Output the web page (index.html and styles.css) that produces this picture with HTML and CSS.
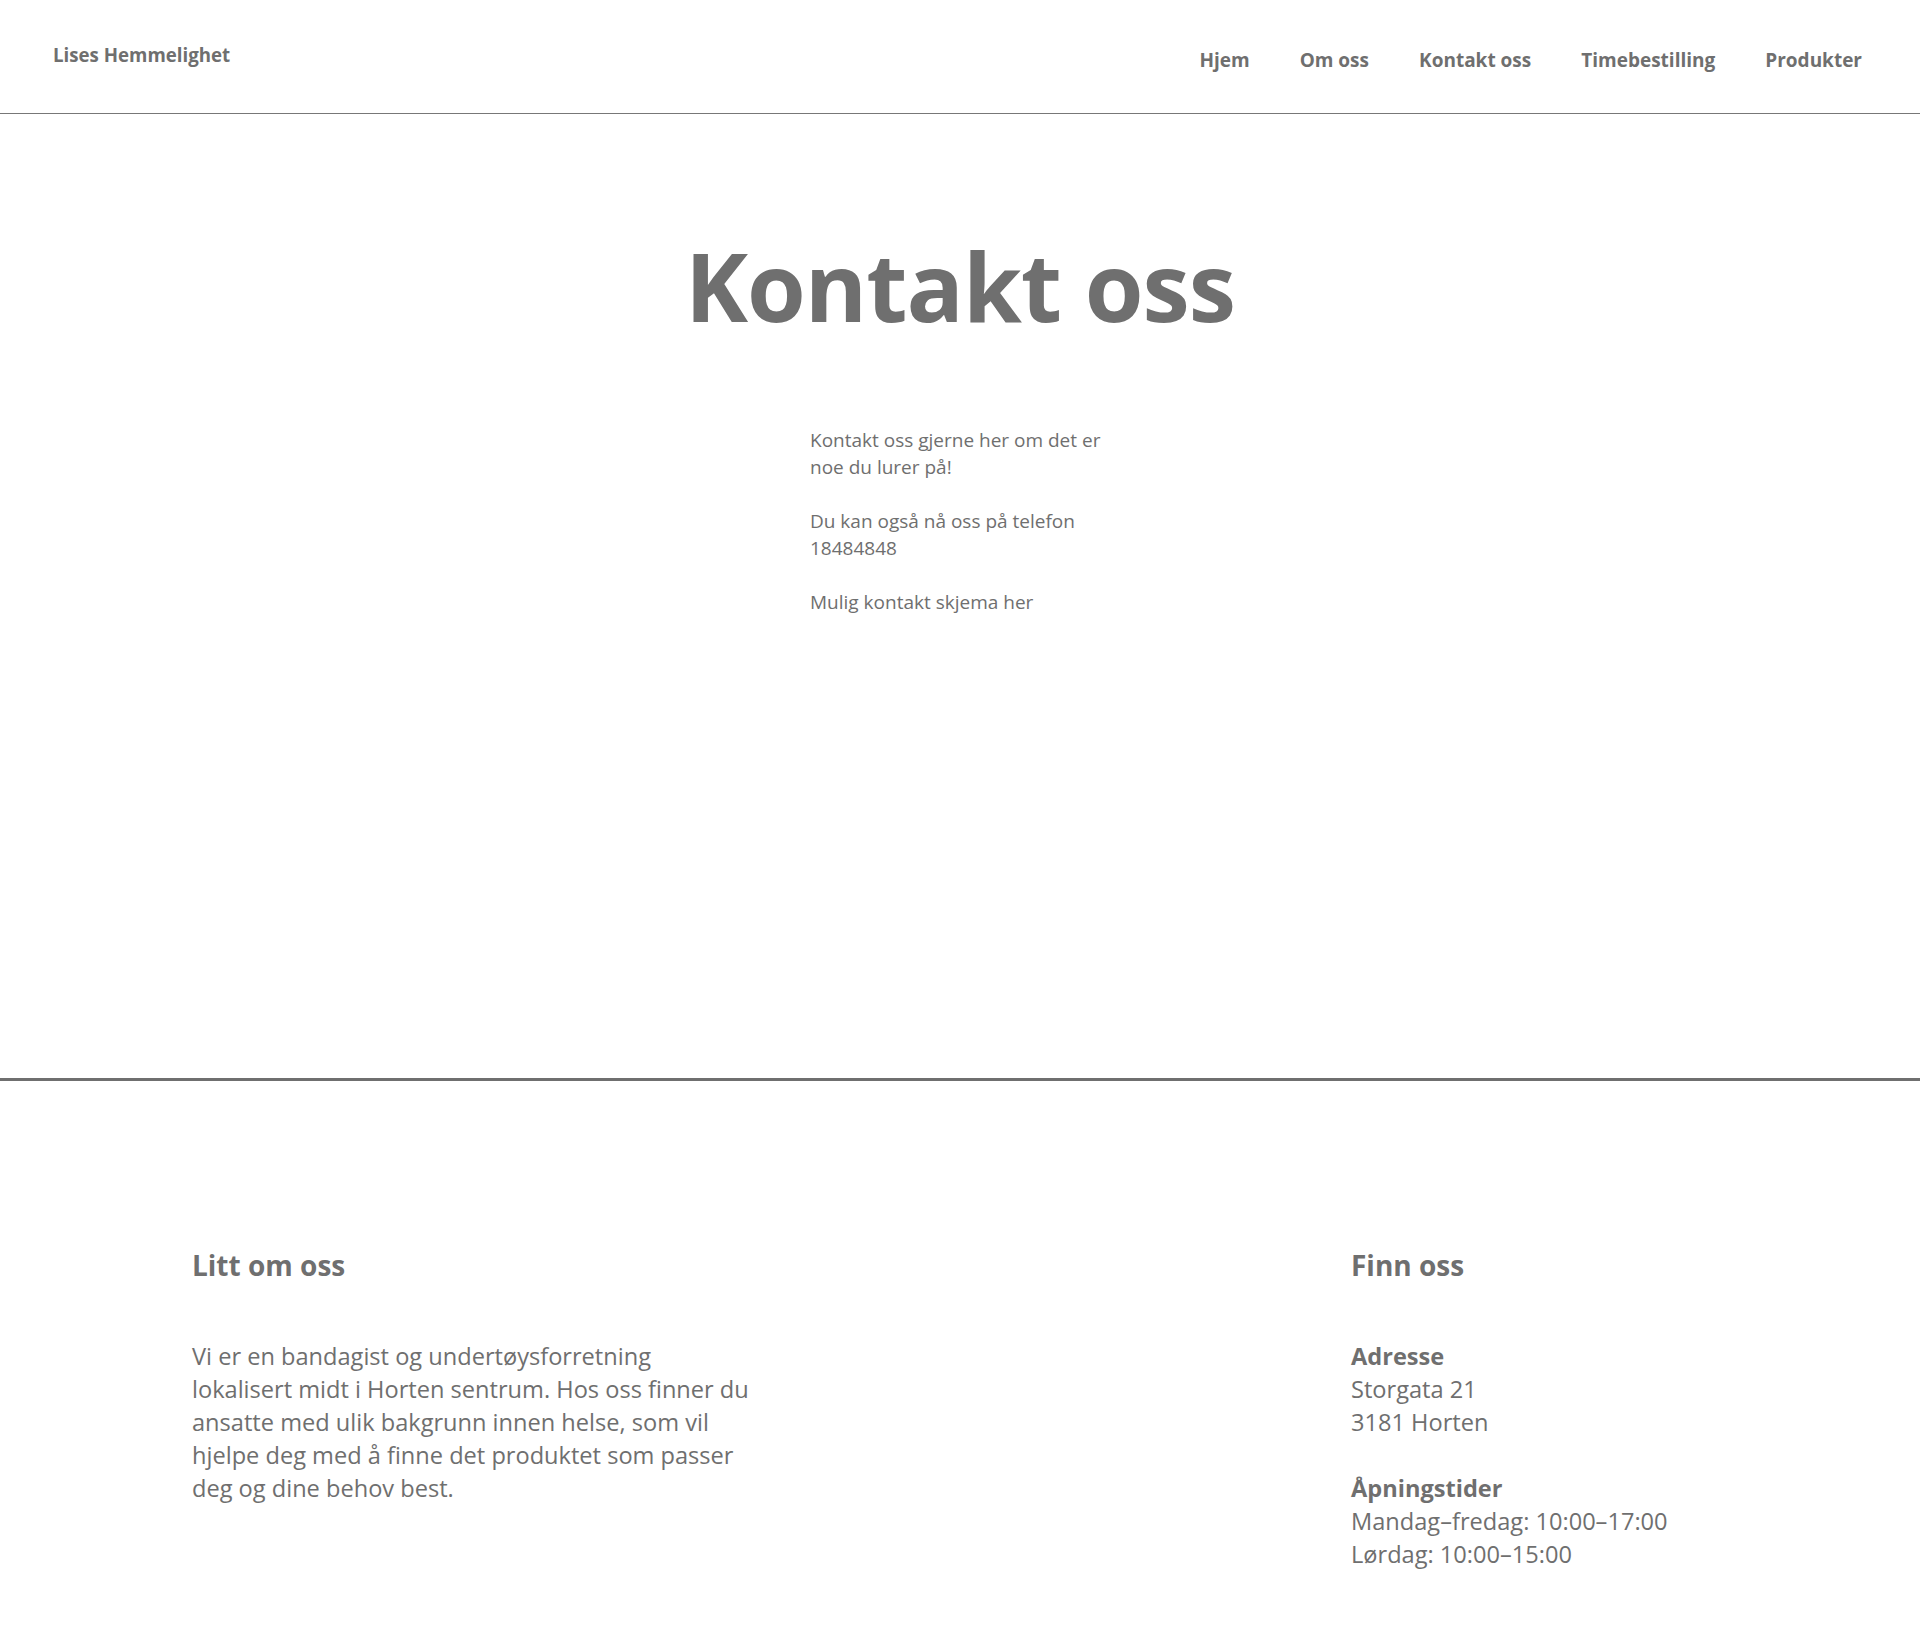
FILE: index.html
```html
<!DOCTYPE html>
<html lang="no">
<head>
<meta charset="utf-8">
<title>Kontakt oss – Lises Hemmelighet</title>
<link rel="stylesheet" href="styles.css">
</head>
<body>
<header class="site-header">
  <a class="logo" href="#">Lises Hemmelighet</a>
  <nav class="nav">
    <a href="#">Hjem</a>
    <a href="#">Om oss</a>
    <a href="#">Kontakt oss</a>
    <a href="#">Timebestilling</a>
    <a href="#">Produkter</a>
  </nav>
</header>
<main class="main">
  <h1 class="title">Kontakt oss</h1>
  <div class="intro">
    <p>Kontakt oss gjerne her om det er noe du lurer på!</p>
    <p>Du kan også nå oss på telefon 18484848</p>
    <p>Mulig kontakt skjema her</p>
  </div>
</main>
<footer class="site-footer">
  <section class="col col-about">
    <h2>Litt om oss</h2>
    <p>Vi er en bandagist og undertøysforretning lokalisert midt i Horten sentrum. Hos oss finner du ansatte med ulik bakgrunn innen helse, som vil hjelpe deg med å finne det produktet som passer deg og dine behov best.</p>
  </section>
  <section class="col col-find">
    <h2>Finn oss</h2>
    <p><strong>Adresse</strong><br>Storgata 21<br>3181 Horten</p>
    <p><strong>Åpningstider</strong><br>Mandag–fredag: 10:00–17:00<br>Lørdag: 10:00–15:00</p>
  </section>
</footer>
</body>
</html>
```
FILE: styles.css
```css
* { box-sizing: border-box; }
html, body { margin: 0; padding: 0; background: #fff; }
body {
  font-family: "Open Sans", "Noto Sans", sans-serif;
  color: #6f6f6f;
}
a { color: inherit; text-decoration: none; }

.site-header {
  display: flex;
  justify-content: space-between;
  align-items: flex-start;
  height: 114px;
  border-bottom: 1px solid #777;
  padding: 0 58px 0 53px;
}
.logo {
  font-size: 18.7px;
  line-height: 1;
  font-weight: 700;
  margin-top: 46px;
}
.nav {
  display: flex;
  gap: 50px;
  margin-top: 51px;
}
.nav a {
  font-size: 19px;
  line-height: 1;
  font-weight: 700;
}

.main {
  min-height: 964px;
  padding-top: 124px;
}
.title {
  margin: 0;
  text-align: center;
  font-size: 95px;
  letter-spacing: -1px;
  line-height: 1;
  font-weight: 700;
}
.intro {
  width: 300px;
  margin: 94px auto 0;
  font-size: 19px;
  line-height: 27px;
}
.intro p { margin: 0 0 27px; }

.site-footer {
  border-top: 3px solid #6f6f6f;
  display: flex;
  justify-content: space-between;
  padding: 170px 0 80px 192px;
}
.col h2 {
  margin: 0 0 61px;
  font-size: 28px;
  line-height: 1;
  font-weight: 700;
}
.col p {
  margin: 0 0 33px;
  font-size: 23.6px;
  line-height: 33px;
}
.col-about { width: 564px; }
.col-find { width: 569px; }
.col strong { font-weight: 700; }
```
